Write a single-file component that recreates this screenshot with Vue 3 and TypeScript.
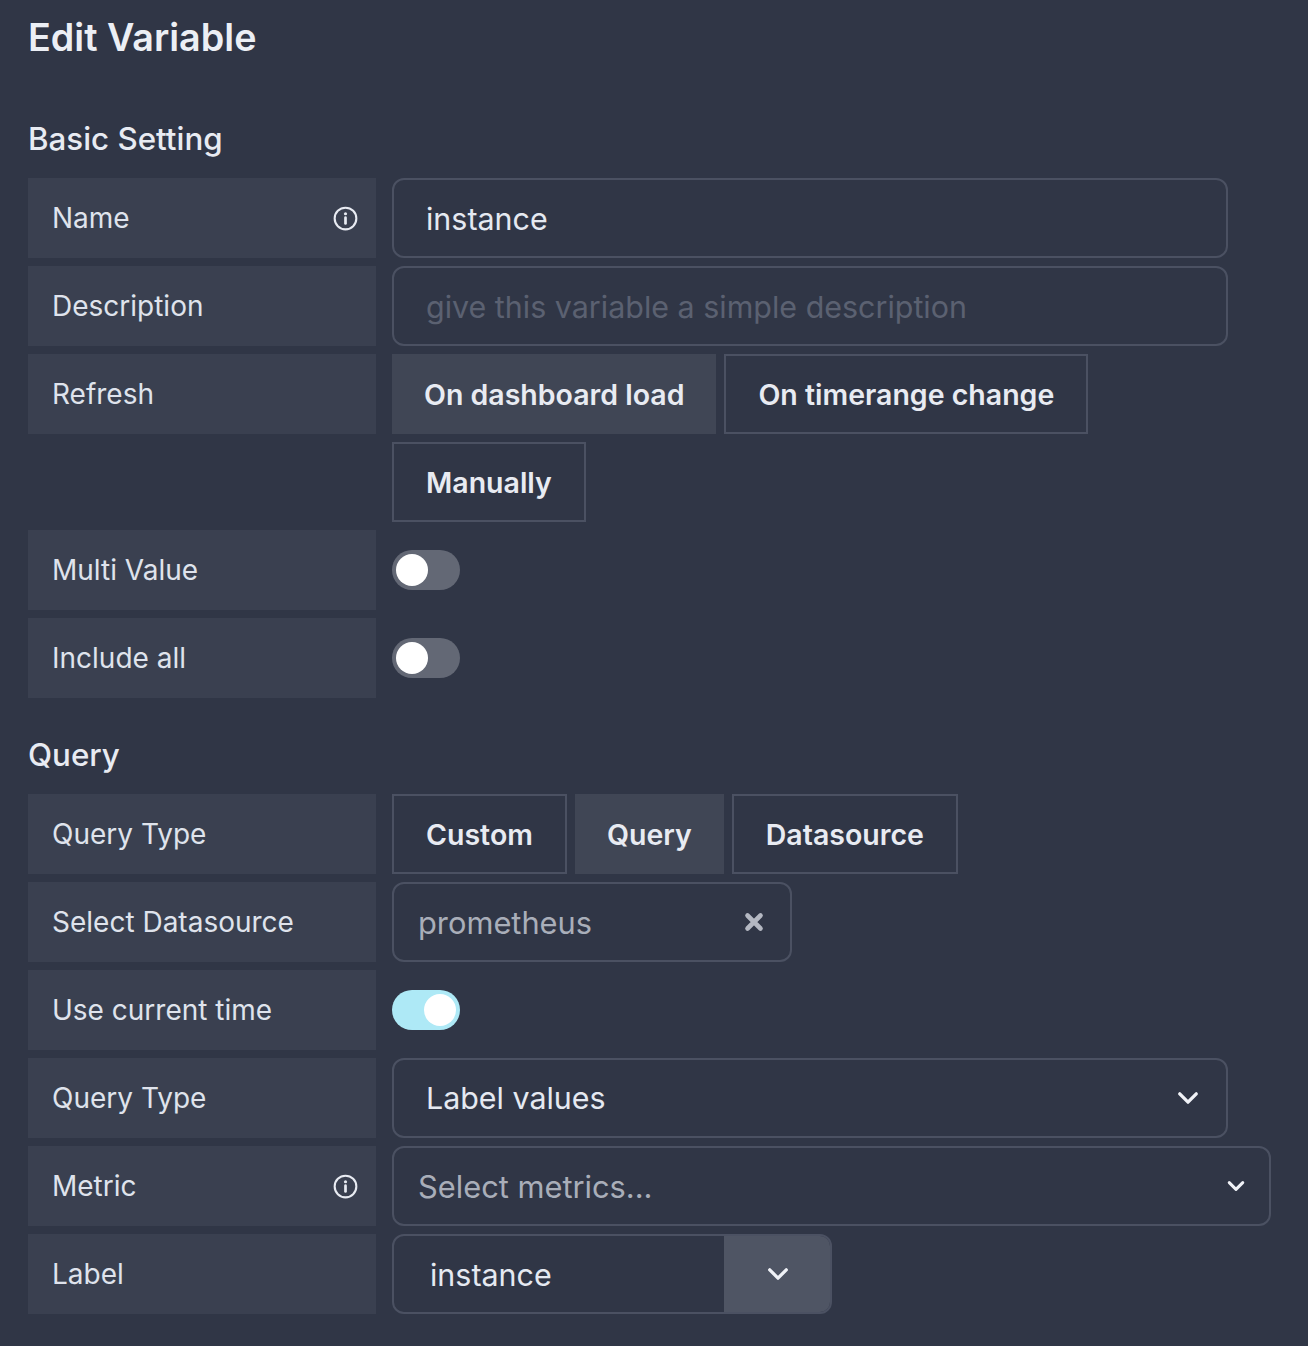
<script setup lang="ts">
import { ref } from 'vue';

const refreshOptions = ['On dashboard load', 'On timerange change', 'Manually'];
const queryOptions = ['Custom', 'Query', 'Datasource'];

const refresh = ref('On dashboard load');
const queryMode = ref('Query');
const multiValue = ref(false);
const includeAll = ref(false);
const useCurrentTime = ref(true);
const name = ref('instance');
const description = ref('');
</script>

<template>
  <div class="page">
    <h1 class="title">Edit Variable</h1>

    <h2 class="section-title first">Basic Setting</h2>
    <div class="rows">
      <div class="row">
        <div class="label">
          <span>Name</span>
          <svg class="info" viewBox="0 0 24 24" fill="none" stroke="currentColor" stroke-width="2" stroke-linecap="round">
            <circle cx="12" cy="12" r="10.4" />
            <path d="M12 11.2v5.6" stroke-width="2.6" />
            <circle cx="12" cy="7.4" r="1.5" fill="currentColor" stroke="none" />
          </svg>
        </div>
        <input v-model="name" class="input" type="text" />
      </div>
      <div class="row">
        <div class="label"><span>Description</span></div>
        <input v-model="description" class="input" type="text" placeholder="give this variable a simple description" />
      </div>
      <div class="row">
        <div class="label"><span>Refresh</span></div>
        <div class="btn-group">
          <button
            v-for="item in refreshOptions"
            :key="item"
            class="btn"
            :class="{ active: refresh === item }"
            @click="refresh = item"
          >
            {{ item }}
          </button>
        </div>
      </div>
      <div class="row">
        <div class="label"><span>Multi Value</span></div>
        <div class="switch-wrap">
          <button class="switch" :class="{ on: multiValue }" @click="multiValue = !multiValue"><i class="knob"></i></button>
        </div>
      </div>
      <div class="row">
        <div class="label"><span>Include all</span></div>
        <div class="switch-wrap">
          <button class="switch" :class="{ on: includeAll }" @click="includeAll = !includeAll"><i class="knob"></i></button>
        </div>
      </div>
    </div>

    <h2 class="section-title second">Query</h2>
    <div class="rows">
      <div class="row">
        <div class="label"><span>Query Type</span></div>
        <div class="btn-group">
          <button
            v-for="item in queryOptions"
            :key="item"
            class="btn"
            :class="{ active: queryMode === item }"
            @click="queryMode = item"
          >
            {{ item }}
          </button>
        </div>
      </div>
      <div class="row">
        <div class="label"><span>Select Datasource</span></div>
        <div class="select datasource">
          <span class="muted">prometheus</span>
          <svg class="clear" viewBox="0 0 20 20" fill="none" stroke="currentColor" stroke-width="4.6" stroke-linecap="round">
            <path d="M3.5 3.5l13 13M16.5 3.5l-13 13" />
          </svg>
        </div>
      </div>
      <div class="row">
        <div class="label"><span>Use current time</span></div>
        <div class="switch-wrap">
          <button class="switch" :class="{ on: useCurrentTime }" @click="useCurrentTime = !useCurrentTime"><i class="knob"></i></button>
        </div>
      </div>
      <div class="row">
        <div class="label"><span>Query Type</span></div>
        <div class="select plain">
          <span>Label values</span>
          <svg class="chevron" viewBox="0 0 24 24" fill="none" stroke="currentColor" stroke-width="3.6" stroke-linecap="round" stroke-linejoin="round">
            <path d="M3 7.5l9 9 9-9" />
          </svg>
        </div>
      </div>
      <div class="row">
        <div class="label">
          <span>Metric</span>
          <svg class="info" viewBox="0 0 24 24" fill="none" stroke="currentColor" stroke-width="2" stroke-linecap="round">
            <circle cx="12" cy="12" r="10.4" />
            <path d="M12 11.2v5.6" stroke-width="2.6" />
            <circle cx="12" cy="7.4" r="1.5" fill="currentColor" stroke="none" />
          </svg>
        </div>
        <div class="select metric">
          <span class="muted">Select metrics...</span>
          <svg class="chevron small" viewBox="0 0 24 24" fill="none" stroke="currentColor" stroke-width="4" stroke-linecap="round" stroke-linejoin="round">
            <path d="M3 7.5l9 9 9-9" />
          </svg>
        </div>
      </div>
      <div class="row">
        <div class="label"><span>Label</span></div>
        <div class="select-addon">
          <span class="addon-value">instance</span>
          <span class="addon-btn">
            <svg class="chevron" viewBox="0 0 24 24" fill="none" stroke="currentColor" stroke-width="3.6" stroke-linecap="round" stroke-linejoin="round">
              <path d="M3 7.5l9 9 9-9" />
            </svg>
          </span>
        </div>
      </div>
    </div>
  </div>
</template>

<style>
html,
body {
  background: #303646;
}
</style>

<style scoped>
.page {
  box-sizing: border-box;
  width: 1308px;
  height: 1346px;
  padding: 0 28px;
  overflow: hidden;
  background: #303646;
  font-family: Inter, "Noto Sans", sans-serif;
  color: #e5e9f1;
}

.title {
  margin: 0;
  padding-top: 15px;
  font-size: 37.7px;
  line-height: 44px;
  font-weight: 600;
  color: #eceff5;
}

.section-title {
  margin: 0;
  font-size: 31.3px;
  line-height: 36px;
  font-weight: 500;
  color: #e8ebf2;
}

.section-title.first {
  margin-top: 62px;
  margin-bottom: 21px;
}

.section-title.second {
  margin-top: 39px;
  margin-bottom: 21px;
}

.rows {
  display: flex;
  flex-direction: column;
  gap: 8px;
}

.row {
  display: flex;
  align-items: flex-start;
  gap: 16px;
}

.label {
  box-sizing: border-box;
  flex: 0 0 348px;
  height: 80px;
  display: flex;
  align-items: center;
  justify-content: space-between;
  padding: 0 18px 0 24px;
  background: #3a4050;
  font-size: 28px;
  color: #dfe3ec;
}

.info {
  width: 25px;
  height: 25px;
  color: #e8ebf2;
}

.input {
  box-sizing: border-box;
  width: 836px;
  height: 80px;
  padding: 2px 32px 0;
  background: transparent;
  border: 2px solid #4b5162;
  border-radius: 12px;
  outline: none;
  font-family: inherit;
  font-size: 30.45px;
  color: #e5e9f1;
}

.input::placeholder {
  color: #5b6171;
  opacity: 1;
}

.btn-group {
  display: flex;
  flex-wrap: wrap;
  gap: 8px;
  width: 836px;
}

.btn {
  box-sizing: border-box;
  height: 80px;
  padding: 1px 32px 0;
  background: transparent;
  border: 2px solid #4b5162;
  font-family: inherit;
  font-size: 28.5px;
  font-weight: 600;
  color: #e8ebf2;
}

.btn.active {
  background: #404655;
  border: none;
}

.switch-wrap {
  height: 80px;
  display: flex;
  align-items: center;
}

.switch {
  box-sizing: border-box;
  display: flex;
  justify-content: flex-start;
  width: 68px;
  height: 40px;
  padding: 4px;
  border: none;
  border-radius: 20px;
  background: #636875;
}

.switch.on {
  justify-content: flex-end;
  background: #aee9f6;
}

.knob {
  display: block;
  width: 32px;
  height: 32px;
  border-radius: 50%;
  background: #fff;
}

.select {
  box-sizing: border-box;
  height: 80px;
  display: flex;
  align-items: center;
  justify-content: space-between;
  border: 2px solid #4b5162;
  border-radius: 12px;
  font-size: 30.4px;
}

.datasource {
  width: 400px;
  padding: 0 26px 0 24px;
}

.plain {
  width: 836px;
  padding: 0 27px 0 32px;
}

.metric {
  width: 879px;
  padding: 0 24px 0 24px;
}

.muted {
  padding-top: 1px;
  font-size: 30.8px;
  color: #a9aeb9;
}

.clear {
  width: 20px;
  height: 20px;
  color: #b4b8c2;
}

.chevron {
  width: 22px;
  height: 22px;
  color: #f0f2f7;
}

.chevron.small {
  width: 18px;
  height: 18px;
}

.select-addon {
  box-sizing: border-box;
  width: 440px;
  height: 80px;
  display: flex;
  border: 2px solid #4b5162;
  border-radius: 12px;
  overflow: hidden;
  font-size: 30.45px;
}

.addon-value {
  flex: 1;
  display: flex;
  align-items: center;
  padding: 2px 0 0 36px;
}

.addon-btn {
  box-sizing: border-box;
  flex: 0 0 106px;
  display: flex;
  align-items: center;
  justify-content: center;
  padding-left: 2px;
  background: #4f5564;
}
</style>
